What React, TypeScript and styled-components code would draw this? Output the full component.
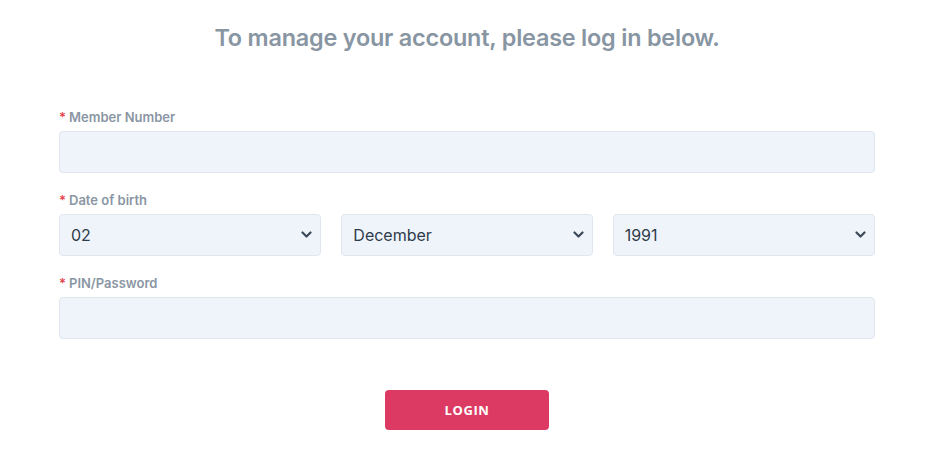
import styled, { createGlobalStyle } from "styled-components";

const GlobalStyle = createGlobalStyle`
  body {
    margin: 0;
    background: #ffffff;
    font-family: Inter, "Noto Sans", sans-serif;
  }
  * { box-sizing: border-box; }
`;

const Page = styled.div`
  width: 934px;
  padding: 23px 59px 0 59px;
`;

const Title = styled.h1`
  margin: 0 0 56px;
  text-align: center;
  font-size: 23.4px;
  line-height: 30px;
  font-weight: 600;
  color: #8895a2;
  letter-spacing: -0.2px;
`;

const Form = styled.form`
  display: flex;
  flex-direction: column;
  gap: 19px;
`;

const Field = styled.div`
  display: flex;
  flex-direction: column;
`;

const Label = styled.label`
  display: block;
  font-size: 13px;
  line-height: 16px;
  font-weight: 600;
  color: #8a96a3;
  margin-bottom: 6px;

  span {
    color: #e5424d;
    margin-right: 3px;
  }
`;

const Input = styled.input`
  height: 42px;
  width: 100%;
  background: #eff4fb;
  border: 1px solid #dfe6ee;
  border-radius: 4px;
  padding: 0 12px;
  font-family: inherit;
  font-size: 16px;
  color: #2e3b4a;
  outline: none;
`;

const SelectRow = styled.div`
  display: grid;
  grid-template-columns: 262fr 251fr 262fr;
  gap: 20px;
`;

const SelectWrap = styled.div`
  position: relative;
`;

const Select = styled.select`
  appearance: none;
  -webkit-appearance: none;
  height: 42px;
  width: 100%;
  background: #eff4fb;
  border: 1px solid #dfe6ee;
  border-radius: 4px;
  padding: 0 32px 0 11px;
  font-family: inherit;
  font-size: 16px;
  font-weight: 400;
  color: #2e3b4a;
  outline: none;
`;

const Chevron = styled.svg`
  position: absolute;
  right: 9px;
  top: 16px;
  width: 11px;
  height: 9px;
  pointer-events: none;
`;

const Actions = styled.div`
  display: flex;
  justify-content: center;
  margin-top: 32px;
`;

const Button = styled.button`
  width: 164px;
  height: 40px;
  border: none;
  border-radius: 4px;
  background: #dc3a62;
  color: #ffffff;
  font-family: "Open Sans", Inter, sans-serif;
  font-size: 13px;
  font-weight: 700;
  letter-spacing: 0.6px;
  padding: 0 0 1px;
  cursor: pointer;
`;

const selects = [
  { name: "day", value: "02", options: Array.from({ length: 31 }, (_, i) => String(i + 1).padStart(2, "0")) },
  {
    name: "month",
    value: "December",
    options: [
      "January", "February", "March", "April", "May", "June",
      "July", "August", "September", "October", "November", "December",
    ],
  },
  { name: "year", value: "1991", options: Array.from({ length: 80 }, (_, i) => String(2010 - i)) },
];

function App() {
  return (
    <Page>
      <GlobalStyle />
      <Title>To manage your account, please log in below.</Title>
      <Form onSubmit={(e) => e.preventDefault()}>
        <Field>
          <Label><span>*</span>Member Number</Label>
          <Input type="text" />
        </Field>
        <Field>
          <Label><span>*</span>Date of birth</Label>
          <SelectRow>
            {selects.map((s) => (
              <SelectWrap key={s.name}>
                <Select name={s.name} defaultValue={s.value}>
                  {s.options.map((o) => (
                    <option key={o} value={o}>{o}</option>
                  ))}
                </Select>
                <Chevron viewBox="0 0 11 9">
                  <path d="M1.5 2.5 L5.5 6.5 L9.5 2.5" fill="none" stroke="#3a4857" strokeWidth="2.2" strokeLinecap="round" strokeLinejoin="round" />
                </Chevron>
              </SelectWrap>
            ))}
          </SelectRow>
        </Field>
        <Field>
          <Label><span>*</span>PIN/Password</Label>
          <Input type="password" />
        </Field>
        <Actions>
          <Button type="submit">LOGIN</Button>
        </Actions>
      </Form>
    </Page>
  );
}

export default App;
